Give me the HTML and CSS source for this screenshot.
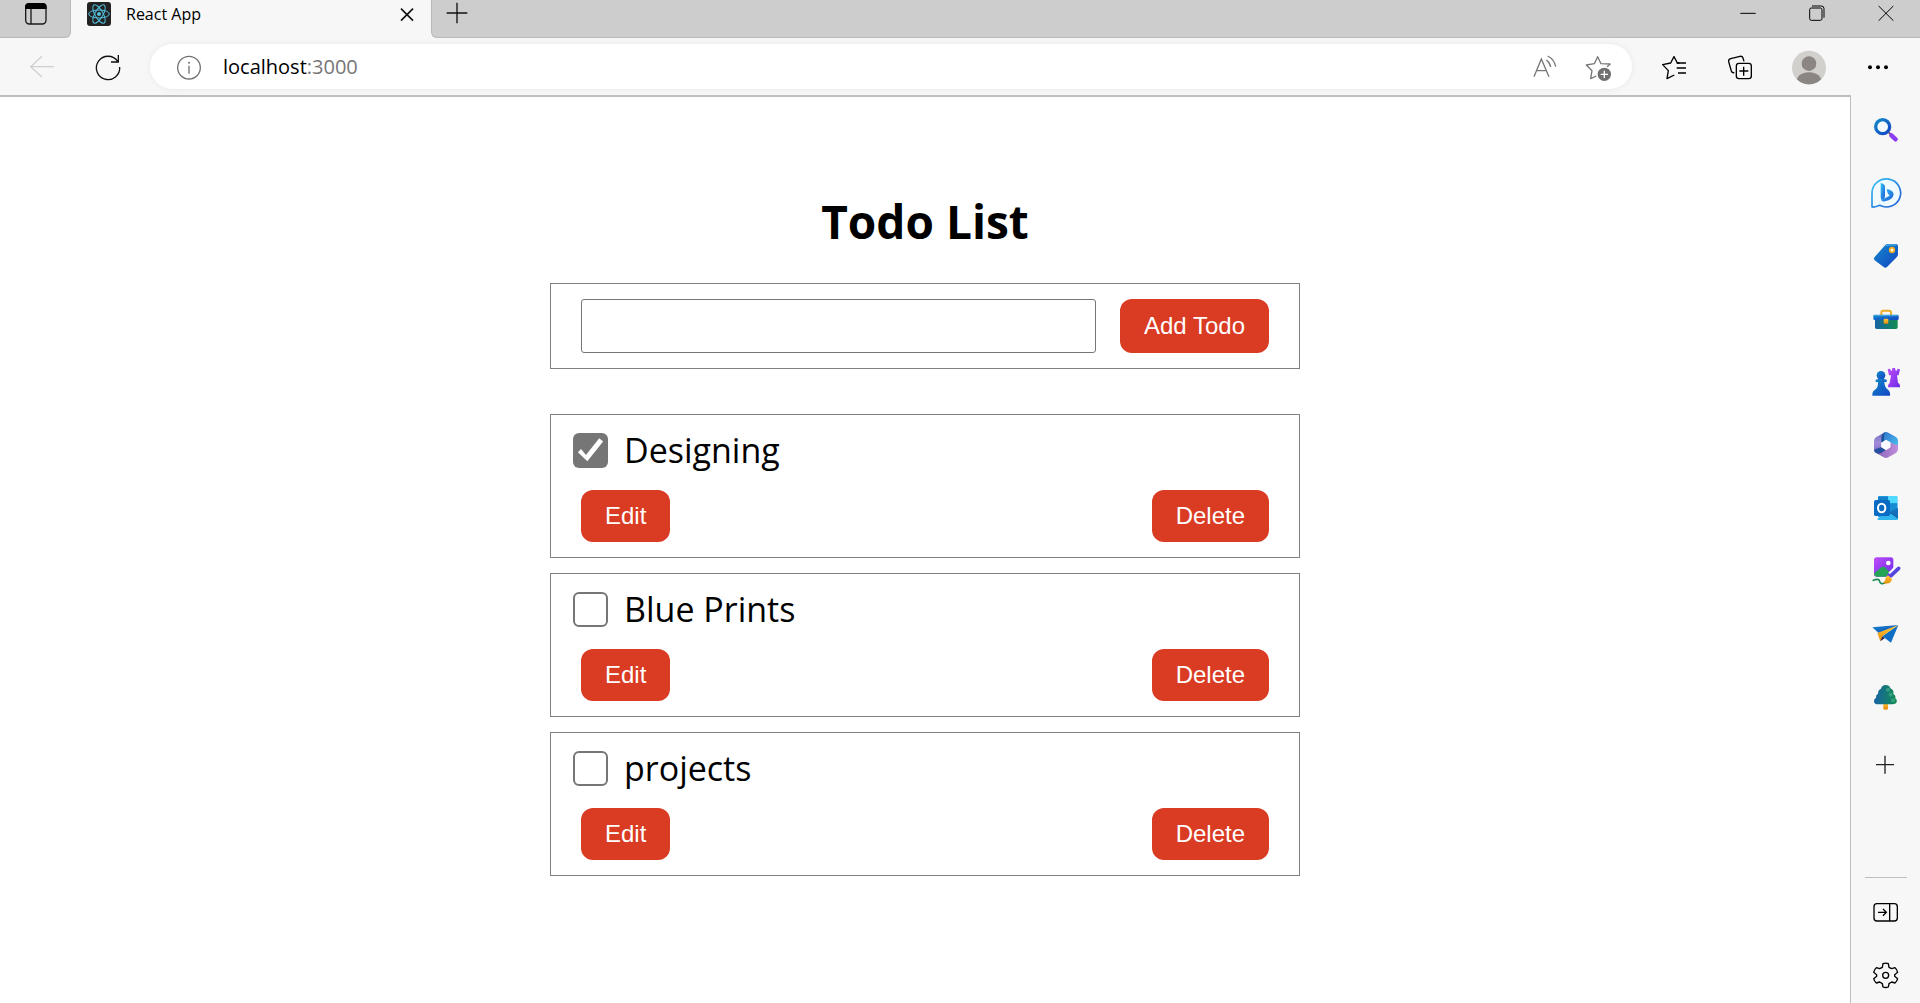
FILE: index.html
```html
<!DOCTYPE html>
<html lang="en">
<head>
<meta charset="utf-8">
<title>React App</title>
<link rel="stylesheet" href="styles.css">
</head>
<body>
<header class="tab-strip">
  <div class="strip strip-left">
    <button class="icon-btn" aria-label="Tab actions">
      <svg class="icon" viewBox="0 0 108 108"><rect x="23" y="23" width="61" height="61" rx="11" fill="none" stroke="#1a1a1a" stroke-width="4"/><path d="M21 39V32Q21 21 33 21H74Q86 21 86 32V39Z" fill="#000"/><path d="M39 38V84" stroke="#1a1a1a" stroke-width="4"/></svg>
    </button>
  </div>
  <div class="tab">
    <svg class="favicon" viewBox="0 0 72 72"><rect width="72" height="72" rx="9" fill="#222"/><g fill="none" stroke="#53c1de" stroke-width="3"><ellipse cx="36" cy="36" rx="31" ry="12"/><ellipse cx="36" cy="36" rx="31" ry="12" transform="rotate(60 36 36)"/><ellipse cx="36" cy="36" rx="31" ry="12" transform="rotate(120 36 36)"/></g><circle cx="36" cy="36" r="6" fill="#53c1de"/></svg>
    <span class="tab-title">React App</span>
    <button class="icon-btn tab-close" aria-label="Close tab">
      <svg class="icon" viewBox="0 0 108 108"><path d="M36 38L72 74M72 38L36 74" stroke="#111" stroke-width="5"/></svg>
    </button>
  </div>
  <div class="strip strip-right">
    <button class="icon-btn" aria-label="New tab">
      <svg class="icon" viewBox="0 0 108 108"><path d="M23 54H85M54 23V85" stroke="#111" stroke-width="4"/></svg>
    </button>
    <div class="window-controls">
      <button class="icon-btn" aria-label="Minimize"><svg class="icon" viewBox="0 0 108 108"><path d="M31 55H77" stroke="#000" stroke-width="3"/></svg></button>
      <button class="icon-btn" aria-label="Restore"><svg class="icon" viewBox="0 0 108 108"><g fill="none" stroke="#000" stroke-width="3"><rect x="32" y="39" width="37" height="37" rx="5"/><path d="M39 33H67Q75 33 75 41V68"/></g></svg></button>
      <button class="icon-btn" aria-label="Close"><svg class="icon" viewBox="0 0 108 108"><path d="M32 33L76 77M76 33L32 77" stroke="#000" stroke-width="3"/></svg></button>
    </div>
  </div>
</header>

<nav class="toolbar">
  <button class="icon-btn" aria-label="Back"><svg class="icon" viewBox="0 0 108 108"><path d="M90 53H19M54 22L20 53L54 84" fill="none" stroke="#d0d0d0" stroke-width="4"/></svg></button>
  <button class="icon-btn" aria-label="Refresh"><svg class="icon" viewBox="0 0 108 108"><path d="M89 54A35 35 0 1 1 83 37M85 18V39H63" fill="none" stroke="#111" stroke-width="4"/></svg></button>
  <div class="address">
    <svg class="icon" viewBox="0 0 108 108"><circle cx="54" cy="56" r="34" fill="none" stroke="#707070" stroke-width="4"/><path d="M54 50V74" stroke="#707070" stroke-width="4"/><circle cx="54" cy="41" r="3" fill="#707070"/></svg>
    <span class="url">localhost<span class="port">:3000</span></span>
    <button class="icon-btn" aria-label="Read aloud"><svg class="icon" viewBox="0 0 108 108"><g fill="none" stroke="#777" stroke-width="4"><path d="M21 83L43 30L66 83M29 65H58"/><path d="M58 33Q69 41 71 54M62 21Q82 31 86 53"/></g></svg></button>
    <button class="icon-btn" aria-label="Add to favorites"><svg class="icon" viewBox="0 0 108 108"><path d="M88 45L60 44L50 23L40 44L16 48L33 65L29 89L46 81" fill="none" stroke="#777" stroke-width="4" stroke-linejoin="round"/><path d="M88 45L78 53" stroke="#777" stroke-width="4"/><circle cx="70" cy="76" r="20" fill="#707070"/><path d="M59 76H81M70 65V87" stroke="#fff" stroke-width="4"/></svg></button>
  </div>
  <button class="icon-btn" aria-label="Favorites"><svg class="icon" viewBox="0 0 108 108"><path d="M71 42H64L54 23L44 42L20 47L37 65L33 89L55 78" fill="none" stroke="#000" stroke-width="4" stroke-linejoin="round"/><path d="M62 42H90M62 57H90M66 72H90" stroke="#000" stroke-width="4"/></svg></button>
  <button class="icon-btn" aria-label="Collections"><svg class="icon" viewBox="0 0 108 108"><g fill="none" stroke="#000" stroke-width="4"><rect x="43" y="43" width="45" height="46" rx="8"/><path d="M65 53V80M52 66H79"/><path d="M66 37L63 27Q61 21 54 22L26 29Q19 31 20 38L28 66Q30 72 37 71"/></g></svg></button>
  <button class="icon-btn profile" aria-label="Profile"><svg class="icon" viewBox="0 0 108 108"><defs><clipPath id="face"><circle cx="54" cy="56" r="50"/></clipPath></defs><circle cx="54" cy="56" r="51" fill="#d2d0cd"/><g clip-path="url(#face)" fill="#8b8683"><circle cx="54" cy="44" r="22"/><path d="M16 108Q14 71 54 70Q94 71 92 108Z"/></g></svg></button>
  <button class="icon-btn" aria-label="Settings and more"><svg class="icon" viewBox="0 0 108 108"><g fill="#000"><circle cx="30" cy="55" r="6"/><circle cx="54" cy="55" r="6"/><circle cx="78" cy="55" r="6"/></g></svg></button>
</nav>

<div class="workspace">
  <main class="page">
    <h1 class="title">Todo List</h1>
    <form class="card add-form">
      <input class="todo-input" type="text" aria-label="New todo">
      <button class="btn" type="button">Add Todo</button>
    </form>
    <ul class="todos">
      <li class="card todo">
        <label class="todo-label"><input class="check" type="checkbox" checked>Designing</label>
        <div class="actions"><button class="btn">Edit</button><button class="btn">Delete</button></div>
      </li>
      <li class="card todo">
        <label class="todo-label"><input class="check" type="checkbox">Blue Prints</label>
        <div class="actions"><button class="btn">Edit</button><button class="btn">Delete</button></div>
      </li>
      <li class="card todo">
        <label class="todo-label"><input class="check" type="checkbox">projects</label>
        <div class="actions"><button class="btn">Edit</button><button class="btn">Delete</button></div>
      </li>
    </ul>
  </main>

  <aside class="sidebar">
    <svg class="defs" width="0" height="0"><defs>
      <linearGradient id="blue" x1="0" y1="0" x2="1" y2="1"><stop offset="0" stop-color="#1389c9"/><stop offset="1" stop-color="#1245c4"/></linearGradient>
      <linearGradient id="sky" x1="0" y1="0" x2="1" y2="1"><stop offset="0" stop-color="#35c3f3"/><stop offset="1" stop-color="#1c57d5"/></linearGradient>
      <linearGradient id="teal" x1="0" y1="0" x2="1" y2="0"><stop offset="0" stop-color="#1763a6"/><stop offset="1" stop-color="#158c50"/></linearGradient>
      <linearGradient id="purple" x1="0" y1="0" x2="1" y2="1"><stop offset="0" stop-color="#c04df8"/><stop offset="1" stop-color="#6b2bea"/></linearGradient>
      <linearGradient id="lilac" x1="0" y1="0" x2="1" y2="0"><stop offset="0" stop-color="#8a63b5"/><stop offset="1" stop-color="#c08fdc"/></linearGradient>
      <linearGradient id="violet" x1="0" y1="0" x2="0" y2="1"><stop offset="0" stop-color="#6f6fc4"/><stop offset=".5" stop-color="#a58ad8"/><stop offset="1" stop-color="#7a6cc8"/></linearGradient>
      <linearGradient id="cyan" x1="0" y1="0" x2="1" y2="1"><stop offset="0" stop-color="#2f6fc8"/><stop offset="1" stop-color="#4cc4f0"/></linearGradient>
      <linearGradient id="gold" x1="0" y1="0" x2="0" y2="1"><stop offset="0" stop-color="#ffcb3d"/><stop offset="1" stop-color="#e88b05"/></linearGradient>
    </defs></svg>
    <button class="side-btn" aria-label="Search"><svg viewBox="0 0 96 96"><circle cx="38" cy="38" r="21" fill="#f4fbff" stroke="url(#blue)" stroke-width="10"/><path d="M56 55L64 63" stroke="#5b4661" stroke-width="5"/><path d="M64 64L77 76" stroke="#8a3df0" stroke-width="13" stroke-linecap="round"/></svg></button>
    <button class="side-btn" aria-label="Bing"><svg viewBox="0 0 96 96"><path d="M6 90V47A43 42 0 1 1 29 85Q17 91 6 90Z" fill="#f1fbff" stroke="url(#sky)" stroke-width="5" stroke-linejoin="round"/><path d="M32 18Q44 20 45 29V57Q44 68 35 69Q32 67 32 60Z" fill="url(#sky)"/><path d="M50 36Q69 39 71 52Q69 68 45 73Q37 75 34 69L59 56Q52 51 50 36Z" fill="url(#sky)"/></svg></button>
    <button class="side-btn" aria-label="Shopping"><svg viewBox="0 0 96 96"><path d="M46 15Q49 12 54 12H77Q84 12 84 19V43Q84 48 80 52L51 81Q46 86 41 81L14 61Q10 56 14 51Z" fill="url(#blue)"/><path d="M47 19Q50 15 55 15H79" fill="none" stroke="#53c0ed" stroke-width="3"/><circle cx="66" cy="30" r="7" fill="#fff7dc" stroke="#f2ad1d" stroke-width="5"/></svg></button>
    <button class="side-btn" aria-label="Tools"><svg viewBox="0 0 96 96"><path d="M34 37V29Q34 23 40 23H57Q63 23 63 29V37" fill="none" stroke="#efad25" stroke-width="6"/><rect x="15" y="44" width="68" height="34" rx="5" fill="url(#teal)"/><rect x="10" y="35" width="76" height="16" rx="4" fill="url(#blue)"/><path d="M13 38H83" stroke="#48afe2" stroke-width="3"/><rect x="41" y="47" width="14" height="15" rx="3" fill="url(#gold)"/></svg></button>
    <button class="side-btn" aria-label="Games"><svg viewBox="0 0 96 96"><path d="M53 10L60 8L63 14H66L67 6H75L77 14H80L83 8L90 10L86 28H81L84 51Q91 53 90 64H54Q53 55 59 51L63 28H57Z" fill="url(#purple)"/><circle cx="33" cy="28" r="13" fill="url(#blue)"/><path d="M17 41Q33 36 50 41V48H43Q44 65 54 71Q62 78 60 89H7Q6 76 15 71Q25 65 24 48H17Z" fill="url(#blue)"/></svg></button>
    <button class="side-btn" aria-label="Microsoft 365"><svg viewBox="0 0 96 96"><path d="M42 11Q48 7 55 11L78 24Q84 28 84 35V55L60 40L48 33L34 41V17Z" fill="url(#cyan)"/><path d="M42 11L18 25Q12 29 12 36V62Q12 68 18 72L34 62V24Q34 16 42 11Z" fill="url(#violet)"/><path d="M42 11Q34 16 34 24V41L42 36V20Q42 14 46 9Z" fill="#1f5297"/><path d="M84 48V60Q84 68 78 72L55 85Q48 89 41 85L20 73L48 63L61 55V40L72 46Z" fill="url(#lilac)"/><path d="M12 62Q12 68 18 72Q26 76 33 72L48 63L34 54Z" fill="#274f9f"/><path d="M48 33L61 40V55L48 63L34 55V41Z" fill="#fbfaff"/></svg></button>
    <button class="side-btn" aria-label="Outlook"><svg viewBox="0 0 96 96"><rect x="24" y="12" width="58" height="65" rx="4" fill="#28a8ea"/><path d="M24 14H54V34H24Z" fill="#1680ca"/><path d="M54 12H79Q82 12 82 16V34H54Z" fill="#50d9ff"/><path d="M54 34H82V51L64 62H54Z" fill="#168cd4"/><path d="M22 80L84 48V80Q84 84 80 84H26Q22 84 22 80Z" fill="#2fb5ed"/><path d="M57 60L84 79V48Z" fill="#1470ba"/><path d="M57 60L84 78" stroke="#135d9d" stroke-width="3"/><rect x="12" y="24" width="48" height="48" rx="5" fill="#0a6bc4"/><ellipse cx="35" cy="48" rx="11" ry="13" fill="none" stroke="#fff" stroke-width="6"/></svg></button>
    <button class="side-btn" aria-label="Image Creator"><svg viewBox="0 0 96 96"><rect x="12" y="7" width="58" height="58" rx="8" fill="url(#purple)"/><circle cx="55" cy="24" r="7" fill="#fff"/><path d="M13 55L32 38Q40 32 47 39L59 51L47 65H20Q13 65 13 55Z" fill="#24a456"/><path d="M84 38L62 60" stroke="#f7f7f7" stroke-width="20"/><path d="M10 76Q27 69 29 79T44 84" fill="none" stroke="#198c57" stroke-width="5" stroke-linecap="round"/><path d="M86 40L63 62" stroke="#5545dc" stroke-width="11" stroke-linecap="round"/><path d="M54 61L66 72Q62 90 39 84Q46 80 46 72Q48 63 54 61Z" fill="url(#gold)"/></svg></button>
    <button class="side-btn" aria-label="Drop"><svg viewBox="0 0 96 96"><path d="M7 28L85 21L29 48Z" fill="url(#blue)"/><path d="M85 21L63 74L37 55Z" fill="#0e6ec4"/><path d="M22 45L85 21L37 55L31 70Z" fill="url(#gold)"/><path d="M37 55L44 61L31 70Z" fill="#2b2148"/></svg></button>
    <button class="side-btn" aria-label="E-tree"><svg viewBox="0 0 96 96"><rect x="40" y="62" width="14" height="24" rx="4" fill="url(#gold)"/><path d="M47 12Q58 12 61 22Q73 27 70 39Q78 43 76 52Q83 57 80 64Q77 70 68 70H24Q14 70 12 62Q11 54 18 50Q17 41 24 38Q24 26 33 23Q36 12 47 12Z" fill="url(#teal)"/><g fill="#48b58d" opacity=".6"><circle cx="54" cy="26" r="6"/><circle cx="62" cy="41" r="6"/><circle cx="69" cy="58" r="6"/></g></svg></button>
    <button class="side-btn customize" aria-label="Customize"><svg viewBox="0 0 96 96"><path d="M18 47H72M45 20V74" stroke="#222" stroke-width="4"/></svg></button>
    <div class="side-bottom">
      <button class="side-btn" aria-label="Hide sidebar"><svg viewBox="0 0 96 96"><g fill="none" stroke="#000" stroke-width="4"><rect x="12" y="23" width="70" height="52" rx="9"/><path d="M59 23V75M24 49H49M39 39L49 49L39 59"/></g></svg></button>
      <button class="side-btn" aria-label="Settings"><svg viewBox="0 0 96 96"><g fill="none" stroke="#000" stroke-width="4" stroke-linejoin="round"><path d="M39 14Q47 11 55 14L57 25L65 29L75 26Q81 31 83 40L74 47V52L83 59Q81 67 75 72L65 69L57 74L55 84Q47 87 39 84L37 74L29 69L19 72Q13 67 11 59L20 52V47L11 40Q13 31 19 26L29 29L37 25Z"/><circle cx="47" cy="49" r="9"/></g></svg></button>
    </div>
  </aside>
</div>
</body>
</html>
```
FILE: styles.css
```css
* { box-sizing: border-box; }

body {
  margin: 0;
  min-height: 100vh;
  display: flex;
  flex-direction: column;
  background: #f7f7f7;
  color: #000;
  font-family: "Segoe UI", "Open Sans", "Noto Sans", sans-serif;
}

button { font: inherit; cursor: pointer; }

.icon-btn, .side-btn {
  display: flex;
  align-items: center;
  justify-content: center;
  padding: 0;
  border: 0;
  background: none;
}
.icon { width: 36px; height: 36px; flex: none; display: block; }

/* Tab strip */
.tab-strip { display: flex; height: 38px; }
.strip {
  display: flex;
  align-items: flex-start;
  background: #cdcdcd;
  border-bottom: 1px solid #b8b8b8;
}
.strip-left { width: 71px; border-right: 1px solid #b8b8b8; border-bottom-right-radius: 6px; }
.strip-right { flex: 1; border-left: 1px solid #b8b8b8; border-bottom-left-radius: 6px; }
.strip .icon-btn { height: 26px; overflow: hidden; }
.strip-left .icon-btn { width: 71px; height: 28px; padding-left: 2px; }
.strip-right .icon-btn { width: 50px; }
.window-controls { display: flex; margin-left: auto; }
.strip-right .window-controls .icon-btn { width: 69px; }
.tab { width: 360px; height: 28px; display: flex; align-items: center; padding: 0 6px 0 16px; }
.favicon { width: 24px; height: 24px; }
.tab-title { margin-left: 15px; font-size: 16px; line-height: 28px; }
.tab-close { margin-left: auto; }

/* Address toolbar */
.toolbar { display: flex; align-items: center; height: 57px; padding: 0 9px; }
.toolbar > .icon-btn { width: 66px; height: 36px; }
.toolbar > .profile { width: 72px; }
.address {
  flex: 1;
  display: flex;
  align-items: center;
  height: 45px;
  margin: 0 9px;
  padding: 0 15px 0 21px;
  border-radius: 23px;
  background: #fff;
  box-shadow: 0 0 6px #e8e8e8;
}
.url { flex: 1; margin-left: 16px; font-size: 20px; line-height: 28px; }
.port { color: #767676; }
.address .icon-btn { margin-left: 18px; }

/* Page */
.workspace { flex: 1; display: flex; }
.page {
  flex: 1;
  padding: 92px 24px 48px;
  border-top: 2px solid #bebebe;
  border-right: 1px solid #bebebe;
  background: #fff;
}
.title { margin: 0 0 30px; font-size: 46px; line-height: 64px; font-weight: 700; text-align: center; }
.card { max-width: 750px; margin: 0 auto 15px; border: 1px solid #808080; }
.add-form { display: flex; gap: 24px; margin-bottom: 45px; padding: 15px 30px; }
.todo-input {
  flex: 1;
  min-width: 0;
  height: 54px;
  padding: 0 12px;
  border: 1px solid #767676;
  border-radius: 3px;
  font: 24px "Liberation Sans", Arial, sans-serif;
}
.btn {
  min-height: 52px;
  padding: 0 24px;
  border: 0;
  border-radius: 12px;
  background: #da3b23;
  color: #fff;
  font: 24px "Liberation Sans", Arial, sans-serif;
}
.todos { margin: 0; padding: 0; list-style: none; }
.todo { padding: 10px 30px 15px 22px; }
.todo-label { display: flex; align-items: center; gap: 16px; font-size: 34px; line-height: 51px; }
.check {
  appearance: none;
  flex: none;
  width: 35px;
  height: 35px;
  margin: 0;
  border: 2px solid #767676;
  border-radius: 6px;
  background: #fff;
}
.check:checked { border: 0; background: #767676; }
.check:checked::before {
  content: "";
  display: block;
  height: 35px;
  background: #fff;
  clip-path: polygon(14% 55%, 23% 46%, 37% 63%, 75% 15%, 86% 24%, 41% 81%);
}
.actions { display: flex; justify-content: space-between; margin: 14px 0 0 8px; }

/* Sidebar */
.sidebar {
  width: 69px;
  display: flex;
  flex-direction: column;
  align-items: center;
  gap: 7px;
  padding-top: 7px;
}
.defs { position: absolute; }
.side-btn { width: 56px; height: 56px; }
.side-btn svg { width: 32px; height: 32px; }
.customize { margin-top: 5px; }
.side-bottom {
  display: flex;
  flex-direction: column;
  align-items: center;
  gap: 7px;
  width: 42px;
  margin-top: auto;
  padding-top: 6px;
  border-top: 1px solid #bebebe;
}
```
